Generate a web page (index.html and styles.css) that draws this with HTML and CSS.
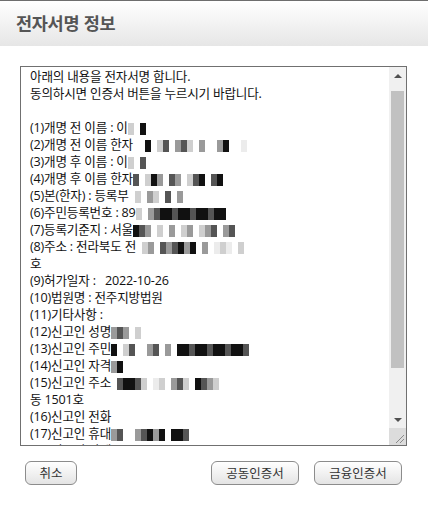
FILE: index.html
```html
<!DOCTYPE html>
<html lang="ko">
<head>
<meta charset="utf-8">
<title>전자서명 정보</title>
<link rel="stylesheet" href="styles.css">
</head>
<body>
<div class="dialog">
  <header class="head"><h1 class="title">전자서명 정보</h1></header>
  <main class="body">
    <div class="box">
      <div class="content">
        <div class="ln">아래의 내용을 전자서명 합니다.</div>
        <div class="ln">동의하시면 인증서 버튼을 누르시기 바랍니다.</div>
        <div class="ln"> </div>
        <div class="ln">(1)개명 전 이름 : 이<span class="mz"><b class="d"></b><b class="s"></b><b class="a"></b></span></div>
        <div class="ln">(2)개명 전 이름 한자<span class="mz"><b class="s"></b><b class="s"></b><b class="a"></b><b class="s"></b><b class="d"></b><b class="b"></b><b class="s"></b><b class="c"></b><b class="b"></b><b class="d"></b><b class="s"></b><b class="c"></b><b class="s"></b><b class="s"></b><b class="c"></b><b class="a"></b><b class="s"></b><b class="s"></b><b class="e"></b></span></div>
        <div class="ln">(3)개명 후 이름 : 이<span class="mz"><b class="d"></b><b class="s"></b><b class="b"></b></span></div>
        <div class="ln">(4)개명 후 이름 한자<span class="mz"><b class="b"></b><b class="s"></b><b class="d"></b><b class="a"></b><b class="c"></b><b class="s"></b><b class="b"></b><b class="c"></b><b class="s"></b><b class="d"></b><b class="b"></b><b class="a"></b><b class="s"></b><b class="b"></b><b class="a"></b></span></div>
        <div class="ln">(5)본(한자) : 등록부<span class="mz"><b class="s"></b><b class="d"></b><b class="s"></b><b class="c"></b><b class="d"></b><b class="s"></b><b class="b"></b><b class="s"></b><b class="c"></b></span></div>
        <div class="ln">(6)주민등록번호 : 89<span class="mz"><b class="d"></b><b class="s"></b><b class="c"></b><b class="b"></b><b class="a"></b><b class="a"></b><b class="b"></b><b class="a"></b><b class="a"></b><b class="b"></b><b class="a"></b><b class="a"></b><b class="b"></b><b class="a"></b><b class="a"></b></span></div>
        <div class="ln">(7)등록기준지 : 서울<span class="mz"><b class="a"></b><b class="b"></b><b class="c"></b><b class="s"></b><b class="d"></b><b class="s"></b><b class="c"></b><b class="s"></b><b class="d"></b><b class="c"></b><b class="s"></b><b class="d"></b><b class="c"></b><b class="b"></b><b class="s"></b><b class="c"></b><b class="b"></b></span></div>
        <div class="ln">(8)주소 : 전라북도 전<span class="mz"><b class="s"></b><b class="d"></b><b class="c"></b><b class="s"></b><b class="b"></b><b class="c"></b><b class="b"></b><b class="a"></b><b class="c"></b><b class="a"></b><b class="s"></b><b class="c"></b><b class="s"></b><b class="e"></b><b class="d"></b><b class="e"></b><b class="s"></b><b class="d"></b></span></div>
        <div class="ln">호</div>
        <div class="ln">(9)허가일자 :   2022-10-26</div>
        <div class="ln">(10)법원명 : 전주지방법원</div>
        <div class="ln">(11)기타사항 :</div>
        <div class="ln">(12)신고인 성명<span class="mz"><b class="c"></b><b class="b"></b><b class="c"></b><b class="s"></b><b class="d"></b></span></div>
        <div class="ln">(13)신고인 주민<span class="mz"><b class="a"></b><b class="s"></b><b class="d"></b><b class="b"></b><b class="s"></b><b class="s"></b><b class="c"></b><b class="b"></b><b class="s"></b><b class="c"></b><b class="s"></b><b class="a"></b><b class="a"></b><b class="b"></b><b class="a"></b><b class="a"></b><b class="b"></b><b class="a"></b><b class="a"></b><b class="b"></b><b class="a"></b><b class="a"></b><b class="b"></b></span></div>
        <div class="ln">(14)신고인 자격<span class="mz"><b class="c"></b><b class="a"></b></span></div>
        <div class="ln">(15)신고인 주소<span class="mz"><b class="s"></b><b class="b"></b><b class="a"></b><b class="a"></b><b class="b"></b><b class="d"></b><b class="s"></b><b class="e"></b><b class="d"></b><b class="s"></b><b class="c"></b><b class="b"></b><b class="d"></b><b class="s"></b><b class="a"></b><b class="b"></b><b class="c"></b><b class="d"></b></span></div>
        <div class="ln">동 1501호</div>
        <div class="ln">(16)신고인 전화</div>
        <div class="ln">(17)신고인 휴대<span class="mz"><b class="c"></b><b class="b"></b><b class="s"></b><b class="s"></b><b class="c"></b><b class="b"></b><b class="a"></b><b class="c"></b><b class="a"></b><b class="s"></b><b class="a"></b><b class="a"></b><b class="b"></b></span></div>
        <div class="ln">(18)신고인 관계<span class="mz"><b class="b"></b><b class="b"></b><b class="b"></b><b class="b"></b></span></div>
      </div>
      <div class="scroll">
        <div class="sbtn"><span class="up"></span></div>
        <div class="track"><div class="thumb"></div></div>
        <div class="sbtn"><span class="down"></span></div>
        <div class="corner">
          <svg width="17" height="17" viewBox="0 0 17 17"><path d="M15 7 L7 15 M15 11 L11 15" stroke="#8a8a8a" stroke-width="1" fill="none"/></svg>
        </div>
      </div>
    </div>
  </main>
  <footer class="actions">
    <button class="btn btn-cancel">취소</button>
    <div class="right">
      <button class="btn btn-wide">공동인증서</button>
      <button class="btn btn-wide">금융인증서</button>
    </div>
  </footer>
</div>
</body>
</html>
```

FILE: styles.css
```css
* { box-sizing: border-box; }
html, body { margin: 0; padding: 0; background: #fff; }
body {
  font-family: "Noto Sans CJK KR", "Noto Sans", sans-serif;
  width: 428px;
  height: 506px;
  overflow: hidden;
}
.dialog { display: flex; flex-direction: column; }
.head {
  height: 46px;
  border-top: 1px solid #6e6e6e;
  background: linear-gradient(#ffffff, #e6e6e6);
  display: flex;
  align-items: center;
  padding: 0 0 2px 16px;
}
.title {
  margin: 0;
  font-size: 17.5px;
  font-weight: 700;
  color: #555;
  letter-spacing: -0.3px;
}
.body { padding: 20px 21px 0 20px; }
.box {
  height: 380px;
  border: 1px solid #707070;
  display: flex;
}
.content {
  flex: 1;
  overflow: hidden;
  padding: 1px 0 0 9px;
  font-family: "Open Sans", "Noto Sans CJK KR", sans-serif;
  font-size: 12.6px;
  line-height: 17px;
  color: #111;
  letter-spacing: -0.2px;
}
.ln { white-space: pre; height: 17px; }
.mz { display: inline-block; vertical-align: middle; height: 12px; line-height: 0; }
.mz b { display: inline-block; width: 6px; height: 12px; }
.mz .a { background: #111; }
.mz .b { background: #555; }
.mz .c { background: #9a9a9a; }
.mz .d { background: #cfcfcf; }
.mz .e { background: #ececec; }
.mz .s { background: transparent; }
.scroll {
  width: 17px;
  display: flex;
  flex-direction: column;
  background: #f0f0f0;
}
.sbtn {
  height: 17px;
  display: flex;
  align-items: center;
  justify-content: center;
}
.up, .down { width: 0; height: 0; border-left: 4px solid transparent; border-right: 4px solid transparent; }
.up { border-bottom: 4px solid #505050; }
.down { border-top: 4px solid #505050; }
.track { flex: 1; padding: 7px 2px 0 2px; }
.thumb { height: 277px; background: #c1c1c1; }
.corner { height: 17px; background: #dcdcdc; line-height: 0; }
.actions {
  display: flex;
  justify-content: space-between;
  padding: 15px 26px 0 25px;
}
.right { display: flex; gap: 15px; }
.btn {
  height: 24px;
  border: 1px solid #8c8c8c;
  border-radius: 6px;
  background: linear-gradient(#ffffff, #e4e4e4);
  font-family: "Noto Sans CJK KR", "Noto Sans", sans-serif;
  font-size: 12.5px;
  color: #333;
  padding: 0;
  line-height: 22px;
}
.btn-cancel { width: 52px; }
.btn-wide { width: 88px; }
```
